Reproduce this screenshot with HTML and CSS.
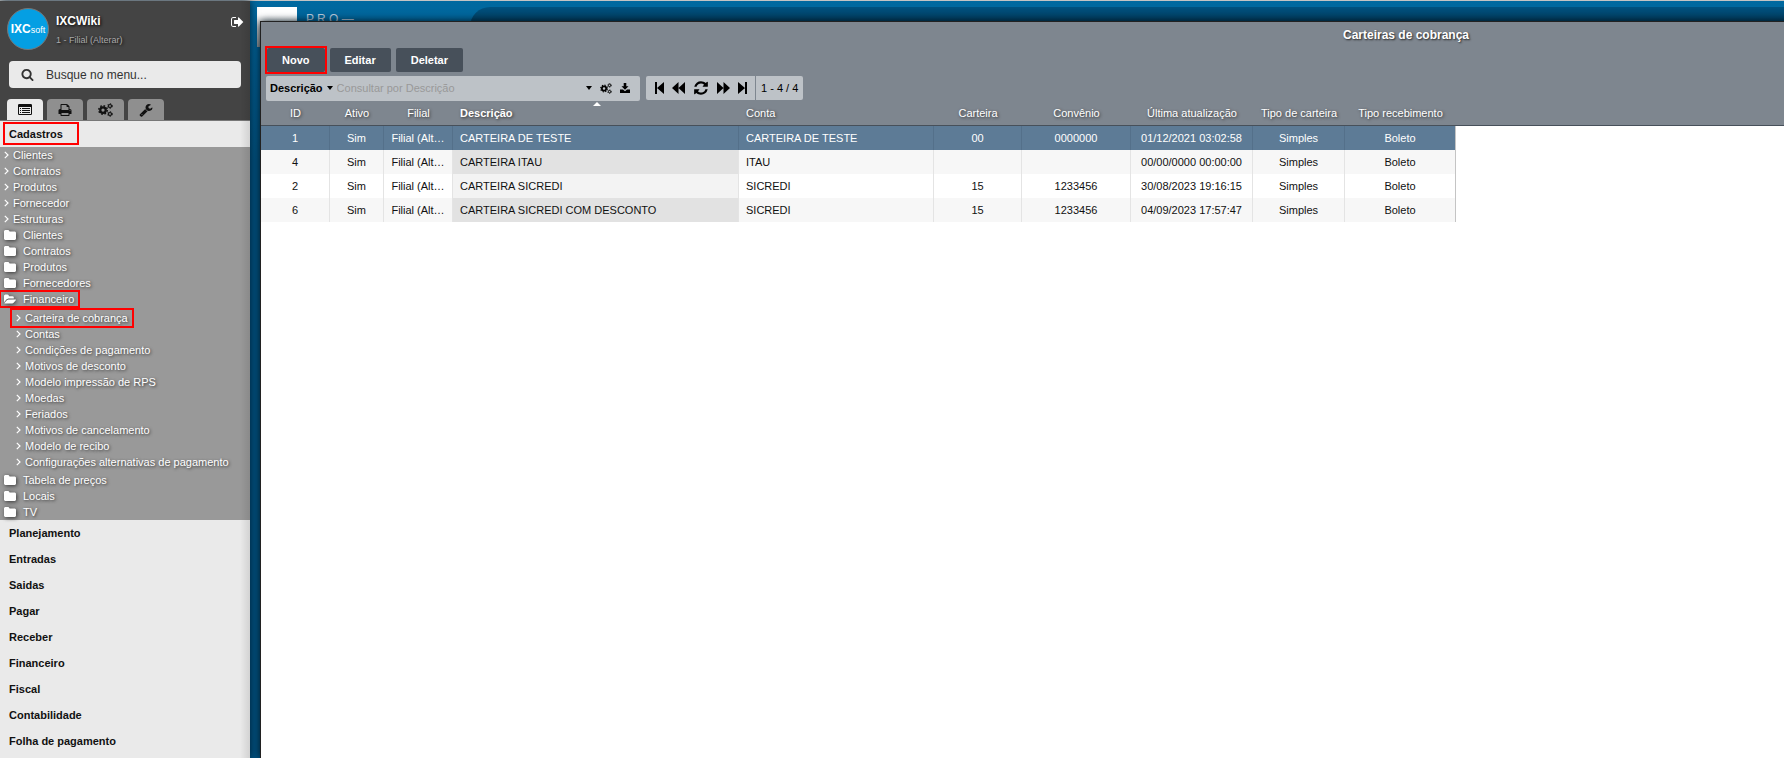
FILE: index.html
```html
<!DOCTYPE html>
<html lang="pt-BR">
<head>
<meta charset="utf-8">
<title>Carteiras de cobrança</title>
<link rel="stylesheet" href="styles.css">
</head>
<body>
<svg class="sprite" aria-hidden="true">
  <symbol id="i-out" viewBox="0 0 1792 1792"><path d="M640 1440q0 4 1 20t.5 26.5-3 23.5-10 19.5-20.5 6.5h-320q-119 0-203.500-84.500t-84.500-203.500v-704q0-119 84.500-203.500t203.500-84.500h320q13 0 22.500 9.500t9.500 22.500q0 4 1 20t.5 26.500-3 23.500-10 19.500-20.500 6.500h-320q-66 0-113 47t-47 113v704q0 66 47 113t113 47h312l11.500 1 11.500 3 8 5.500 7 9 2 13.500zm928-544q0 26-19 45l-544 544q-19 19-45 19t-45-19-19-45v-288h-448q-26 0-45-19t-19-45v-384q0-26 19-45t45-19h448v-288q0-26 19-45t45-19 45 19l544 544q19 19 19 45z"/></symbol>
  <symbol id="i-search" viewBox="0 0 1792 1792"><path d="M1216 832q0-185-131.500-316.500t-316.500-131.500-316.500 131.500-131.500 316.500 131.500 316.500 316.500 131.500 316.500-131.500 131.500-316.500zm512 832q0 52-38 90t-90 38q-54 0-90-38l-343-342q-179 124-399 124-143 0-273.500-55.500t-225-150-150-225-55.500-273.500 55.500-273.500 150-225 225-150 273.500-55.500 273.500 55.500 225 150 150 225 55.500 273.500q0 220-124 399l343 343q37 37 37 90z"/></symbol>
  <symbol id="i-list" viewBox="0 0 14 12"><path fill-rule="evenodd" d="M1.200 0h11.600Q14 0 14 1.200v8.600Q14 11 12.800 11H1.200Q0 11 0 9.800V1.200Q0 0 1.200 0zM1 3v7h12V3z"/><path d="M2 4h1v1H2zM4 4h8v1H4zM2 6h1v1H2zM4 6h8v1H4zM2 8h1v1H2zM4 8h8v1H4z"/></symbol>
  <symbol id="i-print" viewBox="0 0 1792 1792"><path d="M448 1536h896v-256h-896v256zm0-640h896v-384h-160q-40 0-68-28t-28-68v-160h-640v640zm1152 64q0-26-19-45t-45-19-45 19-19 45 19 45 45 19 45-19 19-45zm128 0v416q0 13-9.500 22.500t-22.500 9.500h-224v160q0 40-28 68t-68 28h-960q-40 0-68-28t-28-68v-160h-224q-13 0-22.500-9.500t-9.500-22.500v-416q0-79 56.500-135.500t135.500-56.500h64v-544q0-40 28-68t68-28h672q40 0 88 20t76 48l152 152q28 28 48 76t20 88v256h64q79 0 135.500 56.500t56.500 135.500z"/></symbol>
  <symbol id="i-cogs" viewBox="0 0 30 28"><g fill="none" stroke="currentColor"><circle cx="10" cy="14" r="5.500" stroke-width="4.500"/><circle cx="10" cy="14" r="8.500" stroke-width="3" stroke-dasharray="3.340 3.340"/><circle cx="24" cy="6" r="3" stroke-width="2.400"/><circle cx="24" cy="6" r="4.800" stroke-width="1.800" stroke-dasharray="2.510 2.510"/><circle cx="24" cy="22" r="3" stroke-width="2.400"/><circle cx="24" cy="22" r="4.800" stroke-width="1.800" stroke-dasharray="2.510 2.510"/></g></symbol>
  <symbol id="i-wrench" viewBox="0 0 1792 1792"><path d="M448 1472q0-26-19-45t-45-19-45 19-19 45 19 45 45 19 45-19 19-45zm644-420l-682 682q-37 37-90 37-52 0-91-37l-106-108q-38-36-38-90 0-53 38-91l681-681q39 98 114.500 173.500t173.500 114.500zm634-435q0 39-23 106-47 134-164.500 217.500t-258.500 83.500q-185 0-316.500-131.500t-131.500-316.500 131.500-316.500 316.500-131.500q58 0 121.500 16.500t107.500 46.500q16 11 16 28t-16 28l-293 169v224l193 107q5-3 79-48.500t135.500-81 70.500-35.500q15 0 23.500 10t8.500 25z"/></symbol>
  <symbol id="i-refresh" viewBox="0 0 1792 1792"><path d="M1639 1056q0 5-1 7-64 268-268 434.500t-478 166.500q-146 0-282.500-55t-243.500-157l-129 129q-19 19-45 19t-45-19-19-45v-448q0-26 19-45t45-19h448q26 0 45 19t19 45-19 45l-137 137q71 66 161 102t187 36q134 0 250-65t186-179q11-17 53-117 8-23 30-23h192q13 0 22.500 9.500t9.500 22.500zm25-800v448q0 26-19 45t-45 19h-448q-26 0-45-19t-19-45 19-45l138-138q-148-137-349-137-134 0-250 65t-186 179q-11 17-53 117-8 23-30 23h-199q-13 0-22.500-9.500t-9.500-22.500v-7q65-268 270-434.500t480-166.500q146 0 284 55.500t245 156.500l130-129q19-19 45-19t45 19 19 45z"/></symbol>
  <symbol id="i-folder" viewBox="0 0 12 10"><path d="M1 0h3.500l1 1.200V1.600H11l1 .9V9l-1 1H1L0 9V1z"/></symbol>
  <symbol id="i-open" viewBox="0 128 1880 1408"><path d="M1879 952q0 31-31 66l-336 396q-43 51-120.500 86.500t-143.500 35.500h-1088q-34 0-60.500-13t-26.500-43q0-31 31-66l336-396q43-51 120.500-86.500t143.500-35.500h1088q34 0 60.500 13t26.500 43zm-343-344v160h-832q-94 0-197 47.500t-164 119.500l-337 396-5 6q0-4-.5-12.500t-.5-12.500v-960q0-92 66-158t158-66h320q92 0 158 66t66 158v32h544q92 0 158 66t66 158z"/></symbol>
  <symbol id="i-angle" viewBox="0 0 5 8"><path d="M.8.800 4 4 .8 7.200" fill="none" stroke="currentColor" stroke-width="1.200"/></symbol>
  <symbol id="i-down" viewBox="0 0 6 4"><path d="M0 0h6L3 4z"/></symbol>
  <symbol id="i-save" viewBox="0 0 10 10"><path d="M3.700 0h2.600v3.200h2.200L5 6.800 1.500 3.200h2.200zM0 6.500h3L5 8.300l2-1.800h3V10H0z"/></symbol>
  <symbol id="i-first" viewBox="0 0 9 12"><path d="M0 0h2v12H0zM9 0v12L2 6z"/></symbol>
  <symbol id="i-prev" viewBox="0 0 13 12"><path d="M6.500 0v12L0 6zM13 0v12L6.500 6z"/></symbol>
  <symbol id="i-next" viewBox="0 0 13 12"><path d="M0 0v12l6.500-6zM6.500 0v12L13 6z"/></symbol>
  <symbol id="i-last" viewBox="0 0 9 12"><path d="M7 0h2v12H7zM0 0v12l7-6z"/></symbol>
</svg>
<div class="app">
  <aside class="sidebar">
    <header class="profile">
      <div class="logo"><b>IXC</b><span>soft</span></div>
      <div class="who"><strong>IXCWiki</strong><a href="#">1 - Filial (Alterar)</a></div>
      <button class="logout" aria-label="Sair"><svg><use href="#i-out"/></svg></button>
    </header>
    <label class="search"><svg><use href="#i-search"/></svg><input type="text" placeholder="Busque no menu..." aria-label="Busque no menu"></label>
    <div class="tabs">
      <button class="tab active" aria-label="Menu"><svg class="list"><use href="#i-list"/></svg></button>
      <button class="tab" aria-label="Relatórios"><svg><use href="#i-print"/></svg></button>
      <button class="tab" aria-label="Configurações"><svg class="cogs"><use href="#i-cogs"/></svg></button>
      <button class="tab" aria-label="Ferramentas"><svg><use href="#i-wrench"/></svg></button>
    </div>
    <nav class="menu">
      <a class="section marked" href="#"><span>Cadastros</span></a>
      <ul class="tree">
        <li><a class="leaf" href="#"><svg><use href="#i-angle"/></svg>Clientes</a></li>
        <li><a class="leaf" href="#"><svg><use href="#i-angle"/></svg>Contratos</a></li>
        <li><a class="leaf" href="#"><svg><use href="#i-angle"/></svg>Produtos</a></li>
        <li><a class="leaf" href="#"><svg><use href="#i-angle"/></svg>Fornecedor</a></li>
        <li><a class="leaf" href="#"><svg><use href="#i-angle"/></svg>Estruturas</a></li>
        <li><a class="folder" href="#"><svg><use href="#i-folder"/></svg>Clientes</a></li>
        <li><a class="folder" href="#"><svg><use href="#i-folder"/></svg>Contratos</a></li>
        <li><a class="folder" href="#"><svg><use href="#i-folder"/></svg>Produtos</a></li>
        <li><a class="folder" href="#"><svg><use href="#i-folder"/></svg>Fornecedores</a></li>
        <li><a class="folder marked" href="#"><svg><use href="#i-open"/></svg>Financeiro</a>
          <ul class="subtree">
            <li><a class="leaf marked" href="#"><svg><use href="#i-angle"/></svg>Carteira de cobrança</a></li>
            <li><a class="leaf" href="#"><svg><use href="#i-angle"/></svg>Contas</a></li>
            <li><a class="leaf" href="#"><svg><use href="#i-angle"/></svg>Condições de pagamento</a></li>
            <li><a class="leaf" href="#"><svg><use href="#i-angle"/></svg>Motivos de desconto</a></li>
            <li><a class="leaf" href="#"><svg><use href="#i-angle"/></svg>Modelo impressão de RPS</a></li>
            <li><a class="leaf" href="#"><svg><use href="#i-angle"/></svg>Moedas</a></li>
            <li><a class="leaf" href="#"><svg><use href="#i-angle"/></svg>Feriados</a></li>
            <li><a class="leaf" href="#"><svg><use href="#i-angle"/></svg>Motivos de cancelamento</a></li>
            <li><a class="leaf" href="#"><svg><use href="#i-angle"/></svg>Modelo de recibo</a></li>
            <li><a class="leaf" href="#"><svg><use href="#i-angle"/></svg>Configurações alternativas de pagamento</a></li>
          </ul>
        </li>
        <li><a class="folder" href="#"><svg><use href="#i-folder"/></svg>Tabela de preços</a></li>
        <li><a class="folder" href="#"><svg><use href="#i-folder"/></svg>Locais</a></li>
        <li><a class="folder" href="#"><svg><use href="#i-folder"/></svg>TV</a></li>
      </ul>
      <a class="section" href="#">Planejamento</a>
      <a class="section" href="#">Entradas</a>
      <a class="section" href="#">Saidas</a>
      <a class="section" href="#">Pagar</a>
      <a class="section" href="#">Receber</a>
      <a class="section" href="#">Financeiro</a>
      <a class="section" href="#">Fiscal</a>
      <a class="section" href="#">Contabilidade</a>
      <a class="section" href="#">Folha de pagamento</a>
    </nav>
  </aside>
  <main class="desk">
    <div class="backdrop"><div class="card"></div><span class="brand">P R O —</span><div class="pill"></div></div>
    <section class="window">
      <h1>Carteiras de cobrança</h1>
      <div class="actions">
        <span class="mark"><button>Novo</button></span><button>Editar</button><button>Deletar</button>
      </div>
      <div class="toolbar">
        <div class="filter">
          <button class="field">Descrição<svg class="caret"><use href="#i-down"/></svg></button>
          <input type="text" placeholder="Consultar por Descrição" aria-label="Consultar por Descrição">
          <button aria-label="Opções"><svg class="caret"><use href="#i-down"/></svg></button>
          <button aria-label="Configurar"><svg class="cog"><use href="#i-cogs"/></svg></button>
          <button aria-label="Exportar"><svg class="save"><use href="#i-save"/></svg></button>
        </div>
        <div class="pager">
          <button aria-label="Primeira"><svg class="edge"><use href="#i-first"/></svg></button>
          <button aria-label="Anterior"><svg class="step"><use href="#i-prev"/></svg></button>
          <button aria-label="Atualizar"><svg class="reload"><use href="#i-refresh"/></svg></button>
          <button aria-label="Próxima"><svg class="step"><use href="#i-next"/></svg></button>
          <button aria-label="Última"><svg class="edge"><use href="#i-last"/></svg></button>
          <span class="count">1 - 4 / 4</span>
        </div>
      </div>
      <div class="grid">
      <table>
        <colgroup><col class="c-id"><col class="c-on"><col class="c-id"><col class="c-desc"><col class="c-acc"><col class="c-wal"><col class="c-conv"><col class="c-date"><col class="c-type"><col class="c-rec"></colgroup>
        <thead><tr><th>ID</th><th>Ativo</th><th>Filial</th><th class="left sorted">Descrição</th><th class="left">Conta</th><th>Carteira</th><th>Convênio</th><th>Última atualização</th><th>Tipo de carteira</th><th>Tipo recebimento</th></tr></thead>
        <tbody>
        <tr class="selected"><td>1</td><td>Sim</td><td>Filial (Alt…</td><td class="left sorted">CARTEIRA DE TESTE</td><td class="left">CARTEIRA DE TESTE</td><td>00</td><td>0000000</td><td>01/12/2021 03:02:58</td><td>Simples</td><td>Boleto</td></tr>
        <tr class="alt"><td>4</td><td>Sim</td><td>Filial (Alt…</td><td class="left sorted">CARTEIRA ITAU</td><td class="left">ITAU</td><td></td><td></td><td>00/00/0000 00:00:00</td><td>Simples</td><td>Boleto</td></tr>
        <tr><td>2</td><td>Sim</td><td>Filial (Alt…</td><td class="left sorted">CARTEIRA SICREDI</td><td class="left">SICREDI</td><td>15</td><td>1233456</td><td>30/08/2023 19:16:15</td><td>Simples</td><td>Boleto</td></tr>
        <tr class="alt"><td>6</td><td>Sim</td><td>Filial (Alt…</td><td class="left sorted">CARTEIRA SICREDI COM DESCONTO</td><td class="left">SICREDI</td><td>15</td><td>1233456</td><td>04/09/2023 17:57:47</td><td>Simples</td><td>Boleto</td></tr>
        </tbody>
      </table>
      </div>
    </section>
  </main>
</div>
</body>
</html>
```
FILE: styles.css
```css
* { box-sizing: border-box; }
body { margin: 0; font: 11px/16px "Liberation Sans", Arial, sans-serif; color: #111; overflow: hidden; }
button, input { font: inherit; color: inherit; border: 0; padding: 0; margin: 0; background: none; }
button { display: flex; align-items: center; justify-content: center; cursor: pointer; }
a { color: inherit; text-decoration: none; }
ul { list-style: none; margin: 0; padding: 0; }
svg { fill: currentColor; flex: none; display: block; }
.sprite { position: absolute; width: 0; height: 0; }

.app { display: flex; height: 100vh; border-top: 1px solid #c4c4c4; }

.sidebar { flex: none; width: 250px; display: flex; flex-direction: column; background: #444; overflow: hidden; position: relative; z-index: 1; box-shadow: 0 0 8px #001c2e; }
.sidebar::after { content: ""; position: absolute; top: 0; right: 0; bottom: 0; width: 10px; background: linear-gradient(90deg, transparent, rgba(0, 0, 0, .1)); pointer-events: none; }
.profile { display: flex; padding: 7px 5px 0 7px; height: 60px; text-shadow: 1px 1px 3px #000; }
.logo { width: 42px; height: 42px; border-radius: 50%; border: 1px solid #777; background: #049fe3; color: #fff; display: flex; align-items: baseline; justify-content: center; line-height: 41px; text-shadow: none; }
.logo b { font-size: 12px; }
.logo span { font-size: 9px; }
.who { flex: 1; padding: 4px 0 0 7px; display: flex; flex-direction: column; color: #fff; }
.who strong { font-size: 12px; line-height: 18px; }
.who a { font-size: 9px; line-height: 20px; color: #aaa; }
.logout { height: 14px; margin-top: 7px; color: #fff; }
.logout svg { width: 14px; height: 14px; }
.search { display: flex; align-items: center; height: 27px; margin: 0 9px; padding-left: 12px; gap: 12px; border-radius: 4px; background: #eaeaea; color: #333; }
.search svg { width: 13px; height: 13px; }
.search input { flex: 1; min-width: 0; font-size: 12px; outline: 0; }
.search input::placeholder { color: #333; opacity: 1; }
.tabs { display: flex; gap: 4px; padding: 11px 7px 0; border-bottom: 1px solid #777; }
.tab { padding: 0 11px; height: 21px; border-radius: 4px 4px 0 0; background: #8f8f8f; color: #111; }
.tab.active { background: #ebebeb; }
.tab svg { width: 14px; height: 14px; }
.tab .list { height: 12px; }
.tab .cogs { width: 15px; }
.menu { flex: 1; background: #eaeaea; }
.section { display: block; padding-left: 9px; line-height: 26px; font-weight: bold; }
.marked { outline: 2px solid #f00; }
.section.marked { outline: 0; padding: 1px 0 2px 3px; }
.section.marked span { display: block; width: 76px; height: 23px; border: 2px solid #f00; padding-left: 4px; line-height: 20px; }
.tree { background: #999; color: #fff; text-shadow: 1px 1px 3px #333; }
.leaf { display: flex; align-items: center; gap: 4px; padding-left: 4px; height: 16px; }
.leaf svg { width: 5px; height: 8px; }
.folder { display: flex; align-items: center; gap: 7px; padding-left: 4px; height: 16px; }
.folder svg { width: 12px; height: 10px; filter: drop-shadow(1px 1px 2px #333); }
.folder.marked { width: 79px; outline-offset: -1px; }
.subtree { padding: 3px 0 2px 12px; }
.subtree .marked { width: 120px; }

.desk { flex: 1; min-width: 0; position: relative; overflow: hidden; background: #005280; padding: 20px 0 0 10px; }
.backdrop { position: absolute; top: 0; left: 0; right: 0; height: 160px; background: linear-gradient(#0069a0, #005280); }
.card { position: absolute; left: 7px; top: 6px; width: 40px; height: 40px; background: linear-gradient(#fff 20%, #999); }
.brand { position: absolute; left: 56px; top: 10px; color: #bcd; font-size: 12px; }
.pill { position: absolute; left: 220px; right: 0; top: 6px; height: 40px; border-radius: 20px 0 0 20px; background: linear-gradient(#005280, #003e60 14px); }
.window { position: relative; width: 150%; height: 100%; border: 1px solid #222; border-bottom: 0; background: #7e868f; box-shadow: 0 0 8px #001420; display: flex; flex-direction: column; }
h1 { margin: 0; padding-left: 6px; font-size: 12px; line-height: 26px; text-align: center; color: #fff; text-shadow: 1px 1px 2px #222; }
.actions { display: flex; align-items: center; height: 24px; gap: 5px; padding-left: 4px; }
.actions button { height: 24px; padding: 0 15px; border-radius: 2px; background: #47505a; color: #fff; font-weight: bold; }
.actions .mark { border: 2px solid #f00; margin-right: -2px; }
.toolbar { display: flex; gap: 6px; padding: 4px 0 0 5px; }
.filter { display: flex; align-items: center; width: 374px; height: 25px; padding: 0 10px 1px 4px; gap: 8px; border-radius: 2px; background: #bdc2c7; color: #000; }
.filter input { flex: 1; min-width: 0; outline: 0; }
.filter input::placeholder { color: #999; opacity: 1; }
.field { font-weight: bold; gap: 4px; }
.filter .field { margin-right: -4px; }
.caret { width: 6px; height: 4px; }
.cog { width: 12px; height: 11px; }
.save { width: 10px; height: 10px; }
.pager { display: flex; align-items: center; height: 24px; padding-left: 9px; gap: 8px; border-radius: 2px; background: #bdc2c7; color: #000; }
.edge { width: 9px; height: 12px; }
.step { width: 13px; height: 12px; }
.reload { width: 16px; height: 16px; }
.count { line-height: 24px; padding: 0 5px; border-left: 1px solid #7e868f; }

.grid { flex: 1; background: linear-gradient(#7e868f 24px, #47505a 24px, #47505a 25px, #fff 25px); }
table { table-layout: fixed; width: 1195px; border-collapse: separate; border-spacing: 0; }
.c-id { width: 69px; } .c-on { width: 54px; } .c-desc { width: 286px; } .c-acc { width: 195px; } .c-wal { width: 88px; }
.c-conv { width: 109px; } .c-date { width: 122px; } .c-type { width: 92px; } .c-rec { width: 111px; }
th, td { height: 24px; padding: 0 7px; text-align: center; white-space: nowrap; }
th { height: 25px; font-weight: normal; color: #fff; text-shadow: 1px 1px 3px #333; border-bottom: 1px solid #47505a; }
th.sorted { font-weight: bold; position: relative; }
th.sorted::before { content: ""; position: absolute; top: 1px; left: 50%; margin-left: -3px; border: solid transparent; border-width: 0 4px 4px; border-bottom-color: #fff; }
th.left, td.left { text-align: left; }
td { border-right: 1px solid #e4e4e4; }
td:last-child { border-right-color: #c4c4c4; }
td.sorted { background: #f3f3f3; }
.alt td { background: #f7f7f7; }
.alt td.sorted { background: #e2e2e2; }
.selected td, .selected td.sorted { background: #5d7b96; color: #fff; border-right-color: #54708a; }
.selected td:last-child { border-right-color: #c4c4c4; }
```
